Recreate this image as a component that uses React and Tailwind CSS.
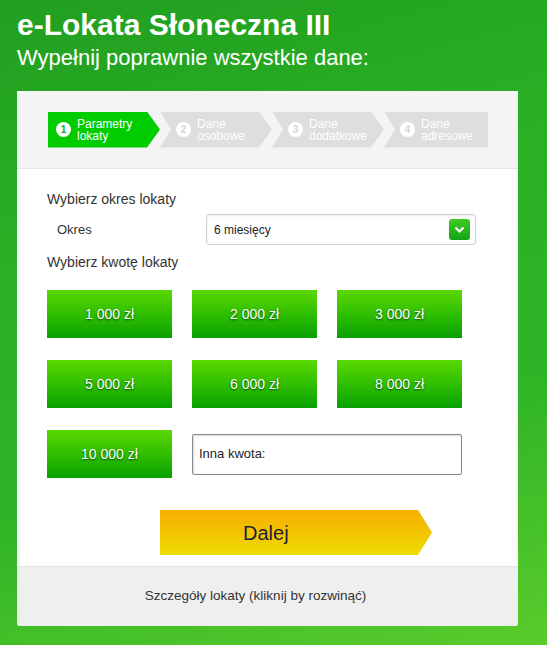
import { useState } from 'react'

const steps = [
  { n: 1, lines: ['Parametry', 'lokaty'], active: true },
  { n: 2, lines: ['Dane', 'osobowe'] },
  { n: 3, lines: ['Dane', 'dodatkowe'] },
  { n: 4, lines: ['Dane', 'adresowe'] },
]

const amounts = ['1 000 zł', '2 000 zł', '3 000 zł', '5 000 zł', '6 000 zł', '8 000 zł']

function Step({ step, index }) {
  const shape =
    index === 0
      ? '[clip-path:polygon(0_0,calc(100%-13px)_0,100%_50%,calc(100%-13px)_100%,0_100%)] pl-[8px]'
      : index === 3
        ? 'w-[104px] [clip-path:polygon(0_0,100%_0,100%_100%,0_100%,11px_50%)] pl-[16px]'
        : '[clip-path:polygon(0_0,calc(100%-13px)_0,100%_50%,calc(100%-13px)_100%,0_100%,11px_50%)] pl-[16px]'
  return (
    <div
      className={`flex h-[36px] items-center gap-[6px] ${index === 3 ? '' : 'w-[112px]'} ${shape} ${
        step.active ? 'bg-[#00cc00]' : 'bg-[#dedede]'
      }`}
    >
      <span
        className={`flex h-[15px] w-[15px] shrink-0 items-center justify-center rounded-full bg-white text-[10px] font-bold leading-none ${
          step.active ? 'text-[#00b800]' : 'text-[#d4d4d4]'
        }`}
      >
        {step.n}
      </span>
      <span className="flex flex-col text-[12px] leading-[12px] text-white">
        <span>{step.lines[0]}</span>
        <span>{step.lines[1]}</span>
      </span>
    </div>
  )
}

function AmountButton({ label, selected, onClick }) {
  return (
    <button
      onClick={onClick}
      className={`flex h-[48px] w-[125px] items-center justify-center bg-[linear-gradient(180deg,#5ad800_0%,#2cbc00_55%,#08a000_100%)] text-[14px] text-white [text-shadow:0_1px_2px_rgba(0,60,0,0.9)] ${
        selected ? 'ring-2 ring-[#0a8a00]' : ''
      }`}
    >
      {label}
    </button>
  )
}

export default function App() {
  const [amount, setAmount] = useState(null)

  return (
    <div className="min-h-[645px] w-full bg-[linear-gradient(165deg,#219f20_0%,#2ab025_35%,#2eb426_65%,#5acb2c_100%)] px-[17px] pb-[18px] pt-[8px] font-['Liberation_Sans',Arial,sans-serif]">
      <h1 className="text-[30px] font-bold leading-[34px] text-white">e-Lokata Słoneczna III</h1>
      <p className="mt-[3px] text-[22px] leading-[26px] text-white">Wypełnij poprawnie wszystkie dane:</p>

      <div className="mt-[20px] w-[501px] overflow-hidden rounded-b-[3px] bg-white">
        <div className="flex h-[78px] items-center border-b border-[#e6e6e6] bg-[#f4f4f4] pl-[31px]">
          {steps.map((s, i) => (
            <Step key={s.n} step={s} index={i} />
          ))}
        </div>

        <div className="px-[30px] pb-[11px] pt-[22px] text-[#333]">
          <div className="text-[14px] leading-[16px]">Wybierz okres lokaty</div>
          <div className="mt-[7px] flex items-center">
            <span className="w-[159px] pl-[10px] text-[13px]">Okres</span>
            <div className="flex h-[31px] w-[270px] items-center justify-between rounded-[3px] border border-[#cfcfcf] bg-white pl-[7px] pr-[5px] shadow-[inset_0_1px_2px_rgba(0,0,0,0.08)]">
              <span className="text-[12px] text-[#222]">6 miesięcy</span>
              <span className="flex h-[21px] w-[21px] items-center justify-center rounded-[3px] bg-[linear-gradient(180deg,#3fcc22,#14a414)]">
                <svg width="11" height="8" viewBox="0 0 11 8">
                  <path d="M1.5 1.5 L5.5 5.5 L9.5 1.5" fill="none" stroke="white" strokeWidth="2.2" />
                </svg>
              </span>
            </div>
          </div>
          <div className="mt-[9px] text-[14px] leading-[16px]">Wybierz kwotę lokaty</div>

          <div className="mt-[20px] grid grid-cols-[125px_125px_125px] gap-x-[20px] gap-y-[22px]">
            {amounts.map((a) => (
              <AmountButton key={a} label={a} selected={amount === a} onClick={() => setAmount(a)} />
            ))}
            <AmountButton label="10 000 zł" selected={amount === '10 000 zł'} onClick={() => setAmount('10 000 zł')} />
            <div className="col-span-2 flex h-[41px] items-center self-center rounded-[2px] border border-[#8a8a8a] bg-white pl-[6px] shadow-[inset_1px_1px_2px_rgba(0,0,0,0.15)]">
              <span className="text-[13px] text-[#222]">Inna kwota:</span>
            </div>
          </div>

          <div className="mt-[32px] flex pl-[113px]">
            <button className="flex h-[45px] w-[272px] items-center bg-[linear-gradient(180deg,#f8ae00_0%,#f2c400_50%,#eedc00_100%)] pl-[83px] text-[20px] text-[#1e1e38] [clip-path:polygon(0_0,calc(100%-14px)_0,100%_50%,calc(100%-14px)_100%,0_100%)]">
              Dalej
            </button>
          </div>
        </div>

        <div className="flex h-[60px] items-center justify-center border-t border-[#e4e4e4] bg-[#efefef] pr-[24px] text-[13.5px] text-[#333]">
          Szczegóły lokaty (kliknij by rozwinąć)
        </div>
      </div>
    </div>
  )
}
